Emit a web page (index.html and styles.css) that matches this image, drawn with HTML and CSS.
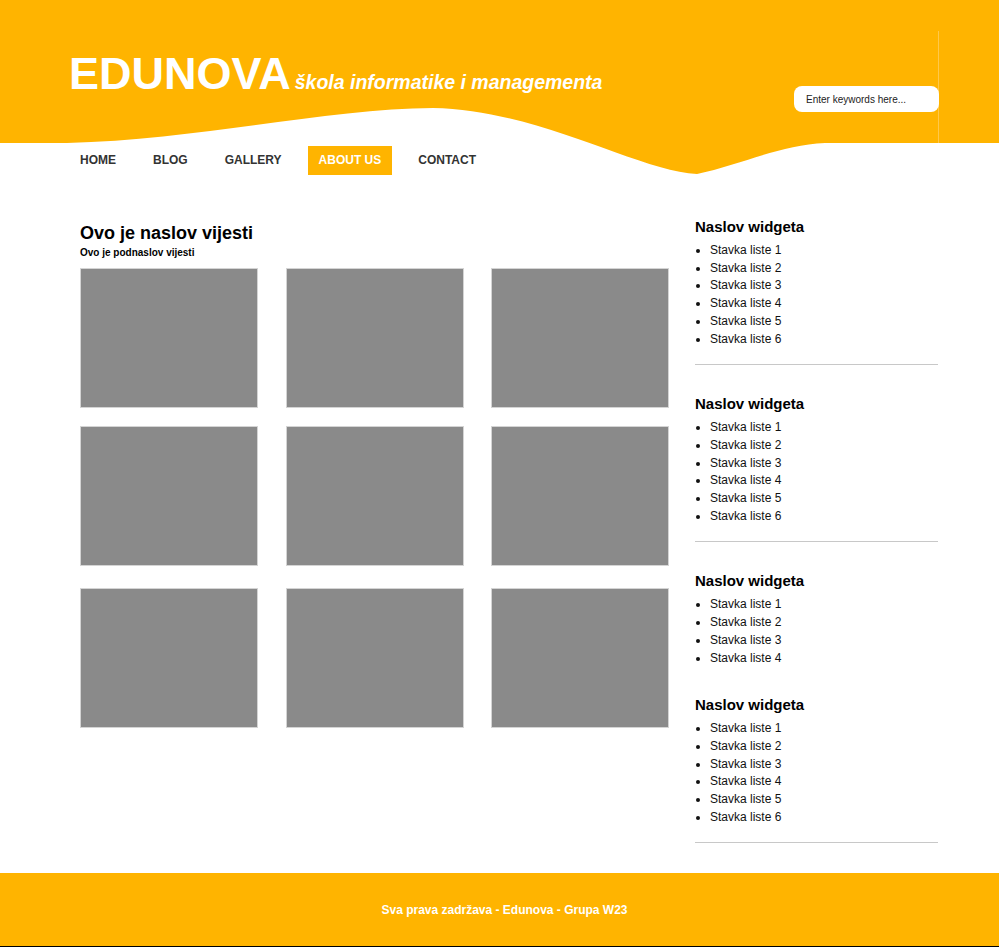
FILE: index.html
```html
<!DOCTYPE html>
<html lang="hr">
<head>
<meta charset="utf-8">
<title>Edunova</title>
<link rel="stylesheet" href="styles.css">
</head>
<body>
<div class="page">
  <svg class="wave" viewBox="0 0 999 180" preserveAspectRatio="none" aria-hidden="true">
    <path d="M0,0 H999 V143 H825 C780,145 740,165 697,174 C640,172 540,110 433,108 C330,108 200,140 67,143 L0,143 Z" fill="#ffb400"/>
    <line x1="938.5" y1="31" x2="938.5" y2="143" stroke="#ffc84a" stroke-width="1"/>
  </svg>
  <div class="wrap">
    <header class="site-header">
      <div class="brand">
        <span class="logo">EDUNOVA</span>
        <span class="tagline">škola informatike i managementa</span>
      </div>
      <input class="search" type="text" placeholder="Enter keywords here...">
    </header>
    <nav class="menu">
      <a href="#">HOME</a>
      <a href="#">BLOG</a>
      <a href="#">GALLERY</a>
      <a href="#" class="active">ABOUT US</a>
      <a href="#">CONTACT</a>
    </nav>
    <div class="content">
      <main class="main">
        <h2 class="news-title">Ovo je naslov vijesti</h2>
        <p class="news-sub">Ovo je podnaslov vijesti</p>
        <div class="gallery">
          <div class="thumb"></div><div class="thumb"></div><div class="thumb"></div>
          <div class="thumb"></div><div class="thumb"></div><div class="thumb"></div>
          <div class="thumb row3"></div><div class="thumb row3"></div><div class="thumb row3"></div>
        </div>
      </main>
      <aside class="sidebar">
        <section class="widget">
          <h3>Naslov widgeta</h3>
          <ul>
            <li>Stavka liste 1</li><li>Stavka liste 2</li><li>Stavka liste 3</li>
            <li>Stavka liste 4</li><li>Stavka liste 5</li><li>Stavka liste 6</li>
          </ul>
        </section>
        <section class="widget">
          <h3>Naslov widgeta</h3>
          <ul>
            <li>Stavka liste 1</li><li>Stavka liste 2</li><li>Stavka liste 3</li>
            <li>Stavka liste 4</li><li>Stavka liste 5</li><li>Stavka liste 6</li>
          </ul>
        </section>
        <section class="widget plain">
          <h3>Naslov widgeta</h3>
          <ul>
            <li>Stavka liste 1</li><li>Stavka liste 2</li><li>Stavka liste 3</li>
            <li>Stavka liste 4</li>
          </ul>
        </section>
        <section class="widget">
          <h3>Naslov widgeta</h3>
          <ul>
            <li>Stavka liste 1</li><li>Stavka liste 2</li><li>Stavka liste 3</li>
            <li>Stavka liste 4</li><li>Stavka liste 5</li><li>Stavka liste 6</li>
          </ul>
        </section>
      </aside>
    </div>
  </div>
  <footer class="site-footer">Sva prava zadržava - Edunova - Grupa W23</footer>
</div>
</body>
</html>
```

FILE: styles.css
```css
* { box-sizing: border-box; }

html, body {
  margin: 0;
  padding: 0;
  background: #fff;
}

body {
  font-family: "Liberation Sans", Arial, sans-serif;
  color: #111;
}

.page {
  position: relative;
  width: 100%;
  overflow: hidden;
}

.wave {
  position: absolute;
  top: 0;
  left: 0;
  width: 100%;
  height: 180px;
  z-index: 0;
}

.wrap {
  position: relative;
  z-index: 1;
  width: 870px;
  margin-left: 69px;
}

.site-header {
  height: 143px;
  padding-top: 51px;
  display: flex;
  justify-content: space-between;
  align-items: flex-start;
}

.brand {
  display: flex;
  align-items: baseline;
  color: #fff;
  line-height: 1;
}

.logo {
  font-size: 45px;
  font-weight: bold;
}

.tagline {
  margin-left: 4px;
  font-size: 19.5px;
  font-weight: bold;
  font-style: italic;
}

.search {
  margin-top: 35px;
  width: 145px;
  height: 26px;
  border: none;
  border-radius: 8px;
  background: #fff;
  padding: 0 0 0 12px;
  font-family: "Liberation Sans", Arial, sans-serif;
  font-size: 10px;
  color: #222;
  outline: none;
}

.search::placeholder {
  color: #222;
  opacity: 1;
}

.menu {
  margin-top: 3px;
  display: flex;
  gap: 15px;
}

.menu a {
  display: block;
  padding: 0 11px;
  line-height: 29px;
  font-size: 12px;
  font-weight: bold;
  color: #333;
  text-decoration: none;
}

.menu a.active {
  background: #ffb400;
  color: #fff;
}

.content {
  display: flex;
  padding-left: 11px;
  margin-top: 43px;
}

.main {
  width: 589px;
  padding-top: 5px;
}

.news-title {
  margin: 0;
  font-size: 18px;
  font-weight: bold;
  color: #000;
}

.news-sub {
  margin: 3px 0 0;
  font-size: 10px;
  font-weight: bold;
  color: #000;
}

.gallery {
  margin-top: 10px;
  display: grid;
  grid-template-columns: repeat(3, 178px);
  justify-content: space-between;
  row-gap: 18px;
}

.thumb {
  height: 140px;
  background: #8a8a8a;
  border: 1px solid #d4d4d4;
}

.thumb.row3 {
  margin-top: 4px;
}

.sidebar {
  width: 243px;
  margin-left: 26px;
}

.widget {
  padding-bottom: 16px;
  border-bottom: 1px solid #c8c8c8;
  margin-bottom: 30px;
}

.widget.plain {
  padding-bottom: 0;
  border-bottom: none;
  margin-bottom: 29px;
}

.widget h3 {
  margin: 0;
  font-size: 15px;
  font-weight: bold;
  color: #000;
}

.widget ul {
  margin: 7px 0 0;
  padding-left: 15px;
  font-size: 12px;
  line-height: 17.7px;
  color: #111;
}

.site-footer {
  height: 75px;
  background: #ffb400;
  border-bottom: 2px solid #000;
  padding: 30px 0 0 10px;
  text-align: center;
  font-size: 12px;
  font-weight: bold;
  color: #fff;
}
```
